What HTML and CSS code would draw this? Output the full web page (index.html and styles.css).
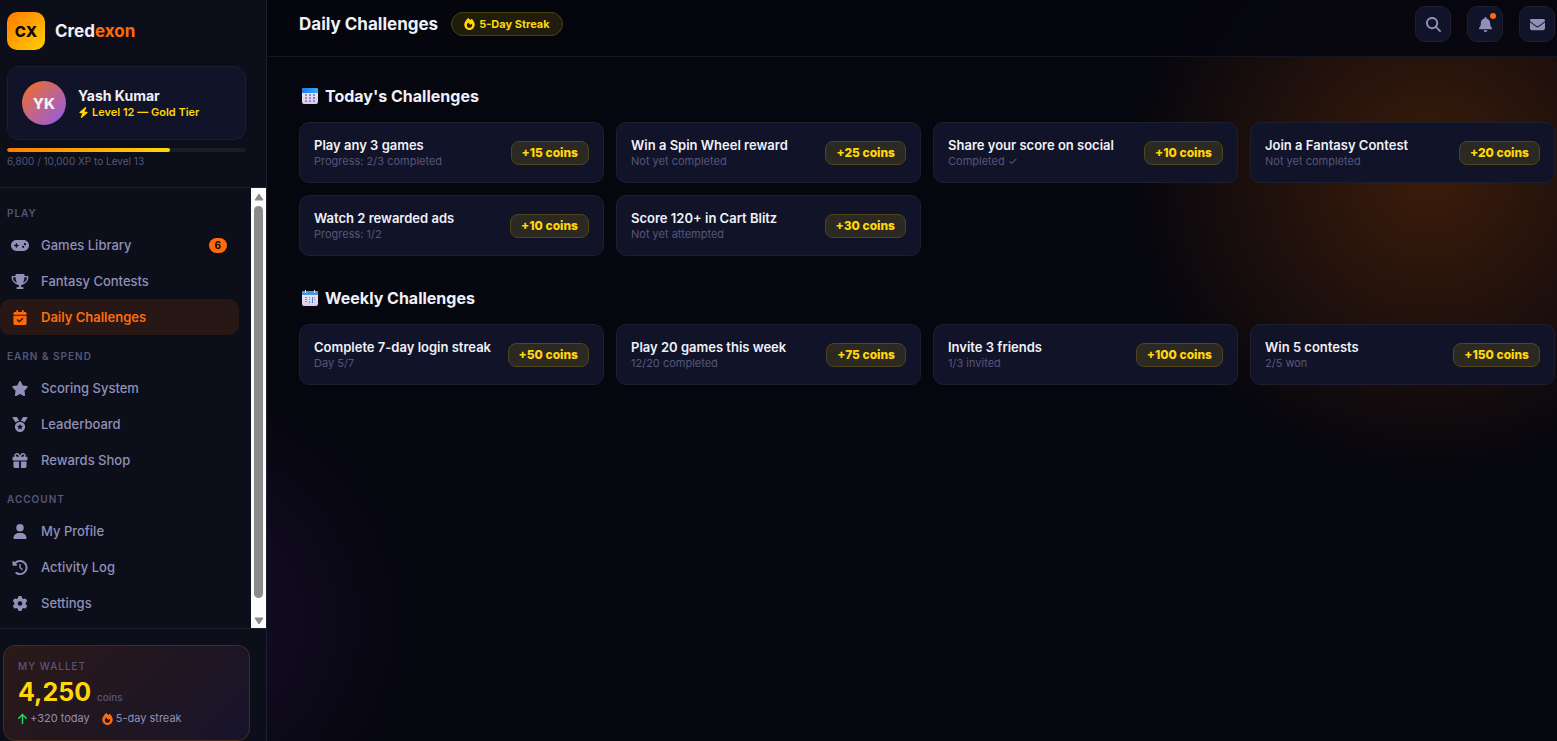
FILE: index.html
```html
<!DOCTYPE html>
<html lang="en">
<head>
<meta charset="utf-8">
<title>Credexon – Daily Challenges</title>
<link rel="stylesheet" href="styles.css">
</head>
<body>
<svg class="sprite" aria-hidden="true">
  <symbol id="i-search" viewBox="0 0 512 512"><path d="M416 208c0 45.9-14.9 88.3-40 122.7L502.6 457.4c12.5 12.5 12.5 32.8 0 45.3s-32.8 12.5-45.3 0L330.7 376c-34.4 25.2-76.8 40-122.7 40C93.1 416 0 322.9 0 208S93.1 0 208 0S416 93.1 416 208zM208 352a144 144 0 1 0 0-288 144 144 0 1 0 0 288z"/></symbol>
  <symbol id="i-bell" viewBox="0 0 448 512"><path d="M224 0c-17.700 0-32 14.300-32 32V51.200C119 66 64 130.600 64 208v18.800c0 47-17.300 92.400-48.500 127.600l-7.400 8.300c-8.400 9.400-10.400 22.900-5.300 34.400S19.400 416 32 416H416c12.600 0 24-7.400 29.200-18.900s3.100-25-5.300-34.400l-7.400-8.300C401.300 319.200 384 273.900 384 226.800V208c0-77.400-55-142-128-156.800V32c0-17.700-14.300-32-32-32zm45.300 493.300c12-12 18.700-28.300 18.700-45.300H224 160c0 17 6.700 33.300 18.700 45.300s28.300 18.700 45.300 18.700s33.300-6.700 45.300-18.700z"/></symbol>
  <symbol id="i-mail" viewBox="0 0 512 512"><path d="M48 64C21.500 64 0 85.500 0 112c0 15.100 7.100 29.300 19.200 38.400L236.800 313.600c11.400 8.500 27 8.500 38.400 0L492.800 150.400c12.100-9.100 19.200-23.300 19.200-38.400c0-26.500-21.500-48-48-48H48zM0 176V384c0 35.300 28.700 64 64 64H448c35.300 0 64-28.700 64-64V176L294.400 339.200c-22.800 17.100-54 17.100-76.800 0L0 176z"/></symbol>
  <symbol id="i-star" viewBox="0 0 576 512"><path d="M316.900 18C311.600 7 300.400 0 288.100 0s-23.400 7-28.800 18L195 150.300 51.400 171.500c-12 1.800-22 10.200-25.700 21.700s-.7 24.200 7.900 32.700L137.800 329 113.200 474.700c-2 12 3 24.200 12.900 31.300s23 8 33.800 2.300l128.300-68.500 128.300 68.500c10.800 5.700 23.900 4.900 33.800-2.300s14.900-19.300 12.900-31.300L438.500 329 542.700 225.900c8.600-8.500 11.700-21.200 7.900-32.700s-13.700-19.900-25.700-21.700L381.200 150.300 316.900 18z"/></symbol>
  <symbol id="i-user" viewBox="0 0 448 512"><path d="M224 256A128 128 0 1 0 224 0a128 128 0 1 0 0 256zm-45.700 48C79.800 304 0 383.800 0 482.300C0 498.700 13.300 512 29.700 512H418.300c16.400 0 29.700-13.300 29.700-29.700C448 383.800 368.200 304 269.700 304H178.300z"/></symbol>
  <symbol id="i-up" viewBox="0 0 384 512"><path d="M214.600 41.400c-12.500-12.500-32.800-12.500-45.300 0l-160 160c-12.500 12.500-12.500 32.800 0 45.300s32.800 12.500 45.300 0L160 141.200V448c0 17.700 14.300 32 32 32s32-14.300 32-32V141.200L329.400 246.600c12.500 12.500 32.800 12.500 45.300 0s12.500-32.800 0-45.300l-160-160z"/></symbol>
  <symbol id="i-bolt" viewBox="0 0 448 512"><path d="M349.400 44.600c5.900-13.700 1.500-29.700-10.600-38.500s-28.600-8-39.900 1.800l-256 224c-10 8.800-13.600 22.900-8.900 35.300S50.700 288 64 288H175.500L98.600 467.400c-5.900 13.700-1.500 29.700 10.600 38.500s28.600 8 39.900-1.800l256-224c10-8.800 13.600-22.900 8.900-35.300s-16.600-20.700-30-20.700H272.500L349.400 44.600z"/></symbol>
  <symbol id="i-trophy" viewBox="0 0 576 512"><path d="M400 0H176c-26.500 0-48.100 21.800-47.100 48.200c.2 5.300 .4 10.600 .7 15.800H24C10.700 64 0 74.700 0 88c0 92.600 33.500 157 78.500 200.700c44.300 43.100 98.300 64.800 138.100 75.800c23.400 6.500 39.400 26 39.400 45.600c0 20.900-17 37.900-37.900 37.900H192c-17.700 0-32 14.300-32 32s14.300 32 32 32H384c17.700 0 32-14.300 32-32s-14.300-32-32-32H357.900C337 448 320 431 320 410.100c0-19.600 15.900-39.200 39.400-45.600c39.900-11 93.900-32.700 138.200-75.800C542.500 245 576 180.600 576 88c0-13.300-10.700-24-24-24H446.400c.3-5.200 .5-10.400 .7-15.800C448.100 21.800 426.500 0 400 0zM48.900 112h84.400c9.100 90.100 29.200 150.300 51.900 190.600c-24.900-11-50.800-26.500-73.200-48.300c-32-31.100-58-76-63-142.300zM464.100 254.300c-22.400 21.800-48.300 37.300-73.200 48.300c22.700-40.300 42.800-100.500 51.900-190.600h84.400c-5.100 66.300-31.100 111.200-63 142.300z"/></symbol>
  <symbol id="i-gamepad" viewBox="0 0 640 512"><path d="M192 64C86 64 0 150 0 256S86 448 192 448H448c106 0 192-86 192-192s-86-192-192-192H192zM496 168a40 40 0 1 1 0 80 40 40 0 1 1 0-80zM392 304a40 40 0 1 1 80 0 40 40 0 1 1 -80 0zM168 200c0-13.300 10.700-24 24-24s24 10.700 24 24v32h32c13.300 0 24 10.700 24 24s-10.700 24-24 24H216v32c0 13.300-10.700 24-24 24s-24-10.700-24-24V280H136c-13.300 0-24-10.700-24-24s10.700-24 24-24h32V200z" fill-rule="evenodd"/></symbol>
  <symbol id="i-check" viewBox="0 0 448 512"><path fill-rule="evenodd" d="M128 0c17.700 0 32 14.300 32 32V64H288V32c0-17.700 14.300-32 32-32s32 14.300 32 32V64h48c26.500 0 48 21.500 48 48v48H0V112C0 85.500 21.500 64 48 64H96V32c0-17.700 14.300-32 32-32zM0 192H448V464c0 26.500-21.500 48-48 48H48c-26.500 0-48-21.500-48-48V192zM329 305c9.400-9.400 9.400-24.600 0-33.900s-24.600-9.400-33.900 0l-95 95-47-47c-9.400-9.400-24.600-9.400-33.900 0s-9.400 24.600 0 33.900l64 64c9.400 9.400 24.600 9.400 33.900 0L329 305z"/></symbol>
  <symbol id="i-medal" viewBox="0 0 512 512"><path fill-rule="evenodd" d="M4.100 38.200C1.400 34.200 0 29.400 0 24.600C0 11 11 0 24.600 0H133.900c11.200 0 21.700 5.900 27.400 15.500l68.500 114.100c-48.200 6.100-91.300 28.600-123.400 61.900L4.100 38.200zm503.700 0L405.600 191.500c-32.100-33.300-75.200-55.800-123.400-61.900L350.700 15.500C356.500 5.900 366.900 0 378.100 0H487.400C501 0 512 11 512 24.600c0 4.800-1.400 9.600-4.100 13.600zM80 336a176 176 0 1 1 352 0A176 176 0 1 1 80 336zM256 236l31 63 69 10-50 48 12 69-62-33-62 33 12-69-50-48 69-10z"/></symbol>
  <symbol id="i-gift" viewBox="0 0 512 512"><path d="M190.500 68.800L225.300 128H224 152c-22.100 0-40-17.900-40-40s17.900-40 40-40h2.200c14.900 0 28.800 7.900 36.300 20.800zM64 88c0 14.400 3.500 28 9.600 40H32c-17.700 0-32 14.300-32 32v64c0 17.700 14.300 32 32 32H480c17.700 0 32-14.300 32-32V160c0-17.700-14.300-32-32-32H438.400c6.100-12 9.600-25.600 9.600-40c0-48.600-39.400-88-88-88h-2.200c-31.900 0-61.500 16.900-77.700 44.400L256 85.500l-24.100-41C215.700 16.900 186.100 0 154.200 0H152C103.400 0 64 39.400 64 88zm336 0c0 22.100-17.900 40-40 40H288h-1.300l34.800-59.200C329.100 55.900 342.900 48 357.800 48H360c22.100 0 40 17.900 40 40zM32 288V464c0 26.500 21.500 48 48 48H224V288H32zM288 512H432c26.500 0 48-21.500 48-48V288H288V512z"/></symbol>
  <symbol id="i-history" viewBox="0 0 512 512"><path d="M75 75L41 41C25.900 25.900 0 36.600 0 57.900V168c0 13.300 10.700 24 24 24H134.100c21.400 0 32.100-25.900 17-41l-30.800-30.800C155 85.500 203 64 256 64c106 0 192 86 192 192s-86 192-192 192c-40.800 0-78.600-12.700-109.700-34.400c-14.500-10.100-34.400-6.600-44.600 7.900s-6.600 34.400 7.900 44.600C151.200 495 201.700 512 256 512c141.400 0 256-114.600 256-256S397.400 0 256 0C185.300 0 121.300 28.700 75 75zm181 53c-13.300 0-24 10.700-24 24V256c0 6.400 2.500 12.500 7 17l72 72c9.400 9.400 24.600 9.400 33.900 0s9.400-24.600 0-33.900l-65-65V152c0-13.300-10.700-24-24-24z"/></symbol>
  <symbol id="i-gear" viewBox="0 0 512 512"><path d="M495.900 166.600c3.200 8.700 .5 18.400-6.400 24.600l-43.300 39.400c1.100 8.300 1.700 16.800 1.700 25.400s-.6 17.100-1.700 25.400l43.300 39.400c6.900 6.200 9.600 15.900 6.400 24.600c-4.400 11.900-9.700 23.300-15.800 34.300l-4.700 8.100c-6.600 11-14 21.400-22.100 31.200c-5.900 7.200-15.700 9.600-24.500 6.800l-55.700-17.700c-13.400 10.300-28.200 18.900-44 25.400l-12.500 57.100c-2 9.100-9 16.300-18.200 17.800c-13.800 2.300-28 3.500-42.500 3.500s-28.700-1.200-42.500-3.500c-9.200-1.500-16.200-8.700-18.200-17.800l-12.500-57.100c-15.800-6.500-30.600-15.100-44-25.400L83.100 425.900c-8.800 2.800-18.600 .3-24.500-6.800c-8.100-9.800-15.500-20.200-22.100-31.200l-4.700-8.100c-6.100-11-11.400-22.400-15.800-34.300c-3.200-8.700-.5-18.400 6.400-24.600l43.300-39.400C64.600 273.100 64 264.600 64 256s.6-17.100 1.700-25.400L22.400 191.200c-6.900-6.200-9.600-15.900-6.400-24.600c4.400-11.900 9.700-23.300 15.800-34.300l4.700-8.100c6.600-11 14-21.400 22.100-31.200c5.900-7.200 15.700-9.600 24.500-6.800l55.700 17.700c13.400-10.300 28.200-18.900 44-25.400l12.500-57.100c2-9.100 9-16.300 18.200-17.800C227.300 1.200 241.500 0 256 0s28.700 1.200 42.500 3.500c9.200 1.500 16.200 8.700 18.200 17.800l12.500 57.100c15.800 6.500 30.600 15.100 44 25.400l55.700-17.700c8.800-2.800 18.600-.3 24.500 6.800c8.100 9.800 15.500 20.200 22.100 31.200l4.700 8.100c6.100 11 11.400 22.400 15.800 34.300zM256 336a80 80 0 1 0 0-160 80 80 0 1 0 0 160z"/></symbol>
  <symbol id="i-fire" viewBox="0 0 448 512"><path fill-rule="evenodd" d="M159.300 5.400c7.800-7.300 19.900-7.200 27.700 .1c27.600 25.900 53.500 53.800 77.700 84c11-14.400 23.500-30.100 37-42.900c7.900-7.400 20.100-7.400 28 .1c34.600 33 63.900 76.600 84.500 118c20.300 40.800 33.800 82.500 33.800 111.900C448 404.200 348.200 512 224 512C98.400 512 0 404.100 0 276.500c0-38.400 17.800-85.300 45.400-131.700C73.300 97.700 112.700 48.600 159.300 5.400zM225.700 416c25.300 0 47.700-7 68.800-21c42.100-29.400 53.400-88.200 28.100-134.400c-4.500-9-16-9.600-22.500-2l-25.200 29.300c-6.600 7.600-18.500 7.400-24.700-.5c-16.500-21-46-58.500-62.800-79.800c-6.300-8-18.300-8.100-24.700-.1c-33.800 42.500-50.800 69.300-50.800 99.400C112 375.400 162.600 416 225.700 416z"/></symbol>
  <linearGradient id="g-head" x1="0" x2="1"><stop offset="0" stop-color="#1b78ea"/><stop offset="1" stop-color="#2fb0fb"/></linearGradient>
  <linearGradient id="g-page" x1="0" y1="0" x2="0" y2="1"><stop offset="0" stop-color="#eef0fa"/><stop offset="1" stop-color="#dcc8ec"/></linearGradient>
</svg>

<div class="app">
  <aside class="sidebar">
    <div class="profile">
      <a class="brand" href="#"><span class="mark">CX</span><span class="brand-name">Cred<b>exon</b></span></a>
      <div class="user">
        <span class="avatar">YK</span>
        <div>
          <div class="user-name">Yash Kumar</div>
          <div class="tier"><svg class="ico"><use href="#i-bolt"/></svg>Level 12 — Gold Tier</div>
        </div>
      </div>
      <div class="xp"><div class="xp-fill" style="width:68%"></div></div>
      <div class="xp-text">6,800 / 10,000 XP to Level 13</div>
    </div>

    <div class="nav-wrap">
      <nav class="nav">
        <h2 class="group">Play</h2>
        <a class="item" href="#"><svg class="ico"><use href="#i-gamepad"/></svg><span>Games Library</span><span class="count">6</span></a>
        <a class="item" href="#"><svg class="ico"><use href="#i-trophy"/></svg><span>Fantasy Contests</span></a>
        <a class="item active" href="#"><svg class="ico"><use href="#i-check"/></svg><span>Daily Challenges</span></a>
        <h2 class="group">Earn &amp; Spend</h2>
        <a class="item" href="#"><svg class="ico"><use href="#i-star"/></svg><span>Scoring System</span></a>
        <a class="item" href="#"><svg class="ico"><use href="#i-medal"/></svg><span>Leaderboard</span></a>
        <a class="item" href="#"><svg class="ico"><use href="#i-gift"/></svg><span>Rewards Shop</span></a>
        <h2 class="group">Account</h2>
        <a class="item" href="#"><svg class="ico"><use href="#i-user"/></svg><span>My Profile</span></a>
        <a class="item" href="#"><svg class="ico"><use href="#i-history"/></svg><span>Activity Log</span></a>
        <a class="item" href="#"><svg class="ico"><use href="#i-gear"/></svg><span>Settings</span></a>
      </nav>
      <div class="scrollbar" aria-hidden="true">
        <svg class="arrow" viewBox="0 0 10 8"><path d="M5 1 9 7H1z"/></svg>
        <div class="thumb"></div>
        <svg class="arrow" viewBox="0 0 10 8"><path d="M5 7 1 1h8z"/></svg>
      </div>
    </div>

    <div class="wallet-area">
      <section class="wallet">
        <div class="wallet-label">My Wallet</div>
        <div class="balance">4,250 <small>coins</small></div>
        <div class="wallet-meta">
          <span><svg class="ico up"><use href="#i-up"/></svg>+320 today</span>
          <span><svg class="ico fire"><use href="#i-fire"/></svg>5-day streak</span>
        </div>
      </section>
    </div>
  </aside>

  <div class="page">
    <header class="topbar">
      <h1>Daily Challenges</h1>
      <span class="streak"><svg class="ico"><use href="#i-fire"/></svg>5-Day Streak</span>
      <div class="actions">
        <button type="button" aria-label="Search"><svg class="ico"><use href="#i-search"/></svg></button>
        <button type="button" aria-label="Notifications"><svg class="ico"><use href="#i-bell"/></svg><span class="dot"></span></button>
        <button type="button" aria-label="Messages"><svg class="ico"><use href="#i-mail"/></svg></button>
      </div>
    </header>

    <main class="content">
      <section>
        <h2 class="heading">
          <svg class="cal" viewBox="0 0 16 16"><rect width="16" height="16" rx="2" fill="url(#g-page)"/><path d="M2 0h12a2 2 0 0 1 2 2v3H0V2a2 2 0 0 1 2-2z" fill="url(#g-head)"/><g fill="#9a8fc0"><path d="M3 6h2v2H3zM7 6h2v2H7zM3 9h2v2H3zM7 9h2v2H7zM11 6h2v2h-2zM3 12h2v2H3zM7 12h2v2H7zM11 12h2v2h-2z"/><path d="M11 9h2v2h-2z" fill="#4a8fe8"/></g></svg>
          Today's Challenges</h2>
        <div class="grid">
          <article class="card"><div><h3>Play any 3 games</h3><p>Progress: 2/3 completed</p></div><span class="coins">+15 coins</span></article>
          <article class="card"><div><h3>Win a Spin Wheel reward</h3><p>Not yet completed</p></div><span class="coins">+25 coins</span></article>
          <article class="card"><div><h3>Share your score on social</h3><p>Completed ✓</p></div><span class="coins">+10 coins</span></article>
          <article class="card"><div><h3>Join a Fantasy Contest</h3><p>Not yet completed</p></div><span class="coins">+20 coins</span></article>
          <article class="card"><div><h3>Watch 2 rewarded ads</h3><p>Progress: 1/2</p></div><span class="coins">+10 coins</span></article>
          <article class="card"><div><h3>Score 120+ in Cart Blitz</h3><p>Not yet attempted</p></div><span class="coins">+30 coins</span></article>
        </div>
      </section>
      <section>
        <h2 class="heading">
          <svg class="cal" viewBox="0 0 16 16"><rect y="1" width="16" height="15" rx="2" fill="url(#g-page)"/><path d="M2 1h12a2 2 0 0 1 2 2v2H0V3a2 2 0 0 1 2-2z" fill="#4b94d8"/><path d="M3 0h1v3H3zM12 0h1v3h-1z" fill="#d9e6f5"/><g fill="#8d8cab"><path d="M3 7h2v1H3zM7 7h1v1H7zM3 9h2v1H3zM7 9h1v1H7zM3 11h2v1H3zM7 11h1v2H7zM12 7h1v1h-1zM12 9h1v1h-1z"/><path d="M10 7h1v6h-1z" fill="#3f8be0"/></g></svg>
          Weekly Challenges</h2>
        <div class="grid">
          <article class="card"><div><h3>Complete 7-day login streak</h3><p>Day 5/7</p></div><span class="coins">+50 coins</span></article>
          <article class="card"><div><h3>Play 20 games this week</h3><p>12/20 completed</p></div><span class="coins">+75 coins</span></article>
          <article class="card"><div><h3>Invite 3 friends</h3><p>1/3 invited</p></div><span class="coins">+100 coins</span></article>
          <article class="card"><div><h3>Win 5 contests</h3><p>2/5 won</p></div><span class="coins">+150 coins</span></article>
        </div>
      </section>
    </main>
  </div>
</div>
</body>
</html>
```
FILE: styles.css
```css
:root {
  --bg: #05060e;
  --panel: #0c0e19;
  --card: #111328;
  --line: #1d1f2e;
  --text: #f0f0f8;
  --soft: #9090b8;
  --dim: #55567a;
  --orange: #ff6b0a;
  --gold: #ffd60a;
}

* { box-sizing: border-box; margin: 0; padding: 0; }

body {
  background: var(--bg);
  color: var(--text);
  font-family: Inter, "Liberation Sans", sans-serif;
  font-size: 13px;
}

a { color: inherit; text-decoration: none; }

.sprite { position: absolute; width: 0; height: 0; }
.ico { width: 14px; height: 14px; fill: currentColor; flex: none; }

.app { display: flex; min-height: 100vh; }

/* Sidebar */
.sidebar {
  width: 267px;
  flex: none;
  display: flex;
  flex-direction: column;
  background: var(--panel);
  border-right: 1px solid var(--line);
}

.profile { padding: 12px 20px 20px 7px; border-bottom: 1px solid var(--line); }

.brand { display: flex; align-items: center; gap: 10px; margin-bottom: 16px; }
.mark {
  width: 38px;
  height: 38px;
  display: grid;
  place-items: center;
  border-radius: 10px;
  background: linear-gradient(135deg, #ff7a00, #ffd000);
  color: #0a0a0a;
  font-size: 15px;
  font-weight: 800;
}
.brand-name { font-size: 17px; font-weight: 700; }
.brand-name b { color: var(--orange); font-weight: 700; }

.user {
  display: flex;
  align-items: center;
  gap: 12px;
  padding: 14px;
  background: var(--card);
  border: 1px solid var(--line);
  border-radius: 12px;
}
.avatar {
  width: 44px;
  height: 44px;
  display: grid;
  place-items: center;
  border-radius: 50%;
  background: linear-gradient(135deg, #f37021, #8f5af0);
  font-size: 15px;
  font-weight: 800;
}
.user-name { font-size: 14px; font-weight: 700; line-height: 18px; }
.tier {
  display: flex;
  align-items: center;
  gap: 3px;
  color: var(--gold);
  font-size: 11px;
  font-weight: 600;
  line-height: 14px;
}
.tier .ico { width: 11px; height: 11px; }

.xp { height: 4px; margin-top: 8px; border-radius: 2px; background: #1a1c26; overflow: hidden; }
.xp-fill { height: 100%; border-radius: 2px; background: linear-gradient(90deg, #ff7a00, #ffd60a); }
.xp-text { margin-top: 3px; color: var(--dim); font-size: 10px; line-height: 12px; }

.nav-wrap { display: flex; }
.nav { flex: 1; padding: 4px 12px 7px 0; }
.group {
  padding: 15px 7px 8px;
  color: var(--dim);
  font-size: 10px;
  font-weight: 600;
  line-height: 12px;
  letter-spacing: 1px;
  text-transform: uppercase;
}
.item {
  display: flex;
  align-items: center;
  gap: 12px;
  height: 36px;
  padding: 0 12px 0 11px;
  border-radius: 10px;
  color: var(--soft);
  font-weight: 500;
}
.item .ico { width: 18px; height: 15px; }
.item.active { background: #271815; color: var(--orange); font-weight: 600; }
.count {
  margin-left: auto;
  padding: 1px 6px;
  border-radius: 8px;
  background: var(--orange);
  color: #0a0a0a;
  font-size: 10px;
  font-weight: 700;
  line-height: 13px;
}

.scrollbar {
  width: 15px;
  display: flex;
  flex-direction: column;
  align-items: center;
  gap: 5px;
  padding: 5px 0 3px;
  background: #fcfcfc;
}
.arrow { width: 10px; height: 8px; fill: #8b8b8b; stroke: #8b8b8b; stroke-linejoin: round; }
.thumb { flex: 1; width: 9px; margin-bottom: 14px; border-radius: 5px; background: #8b8b8b; }

.wallet-area { padding: 16px 16px 0 3px; border-top: 1px solid var(--line); }
.wallet {
  padding: 14px;
  border: 1px solid #4d2a1e;
  border-radius: 12px;
  background: linear-gradient(135deg, #2b1917, #17142b);
}
.wallet-label { color: var(--dim); font-size: 10px; font-weight: 500; line-height: 13px; letter-spacing: 1px; text-transform: uppercase; }
.balance { margin: 2px 0; color: var(--gold); font-size: 25px; font-weight: 700; line-height: 34px; }
.balance small { color: var(--dim); font-size: 10px; font-weight: 500; line-height: 1; }
.wallet-meta { display: flex; gap: 12px; color: var(--soft); font-size: 11px; line-height: 15px; }
.wallet-meta span { display: flex; align-items: center; gap: 3px; }
.wallet-meta .ico { width: 11px; height: 12px; }
.wallet-meta .up { width: 9px; color: #22d365; }
.wallet-meta .fire { color: var(--orange); }

/* Main column */
.page {
  flex: 1;
  min-width: 0;
  background:
    radial-gradient(circle at calc(100% - 127px) 175px, #3c1c0a 0, transparent 305px),
    radial-gradient(circle at -87px 620px, #180e2a 0, transparent 245px);
}
.topbar {
  display: flex;
  align-items: center;
  padding: 6px 2px 14px 32px;
  background: rgba(5, 6, 14, .9);
  border-bottom: 1px solid #15161f;
}
.topbar h1 { font-size: 17px; font-weight: 700; }
.streak {
  display: flex;
  align-items: center;
  gap: 4px;
  margin-left: 13px;
  padding: 0 12px;
  border: 1px solid #4d430f;
  border-radius: 12px;
  background: #211d0d;
  color: var(--gold);
  font-size: 11px;
  font-weight: 700;
  line-height: 22px;
}
.streak .ico { width: 11px; height: 12px; }
.actions { display: flex; gap: 16px; margin-left: auto; }
.actions button {
  position: relative;
  width: 36px;
  height: 36px;
  display: grid;
  place-items: center;
  border: 1px solid var(--line);
  border-radius: 10px;
  background: var(--card);
  color: var(--soft);
}
.actions .ico { width: 15px; height: 15px; }
.dot {
  position: absolute;
  top: 6px;
  right: 6px;
  width: 6px;
  height: 6px;
  border-radius: 50%;
  background: var(--orange);
}

.content { display: flex; flex-direction: column; gap: 31px; padding: 28px 2px 32px 32px; }
.heading {
  display: flex;
  align-items: center;
  gap: 7px;
  margin-bottom: 15px;
  padding-left: 3px;
  font-size: 16px;
  font-weight: 700;
  line-height: 22px;
}
.cal { width: 16px; height: 16px; flex: none; }
.grid { display: grid; grid-template-columns: repeat(auto-fill, minmax(280px, 1fr)); gap: 12px; }
.card {
  display: flex;
  align-items: center;
  justify-content: space-between;
  gap: 12px;
  padding: 14px;
  background: var(--card);
  border: 1px solid var(--line);
  border-radius: 10px;
}
.card h3 { font-size: 13px; font-weight: 600; line-height: 16px; }
.card p { margin-top: 1px; color: var(--dim); font-size: 11px; line-height: 14px; }
.coins {
  flex: none;
  padding: 0 10px;
  border: 1px solid #4f4619;
  border-radius: 8px;
  background: #2c2822;
  color: var(--gold);
  font-size: 12px;
  font-weight: 800;
  line-height: 22px;
}
```
